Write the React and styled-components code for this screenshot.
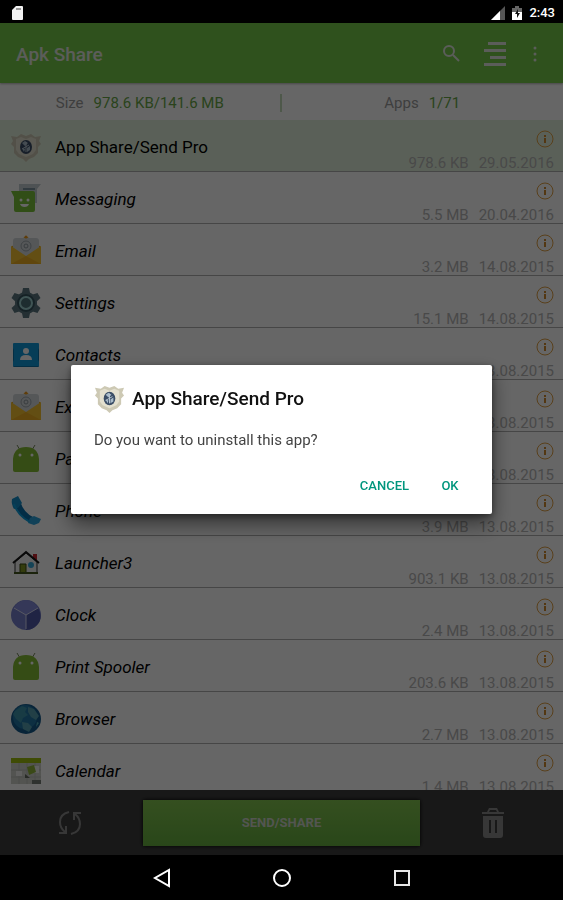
import React, { useState } from "react";
import styled, { createGlobalStyle } from "styled-components";

const GlobalStyle = createGlobalStyle`
  * {
    box-sizing: border-box;
  }
  body {
    margin: 0;
    background: #000;
    font-family: Roboto, "Liberation Sans", sans-serif;
  }
  h1, h2, p, ul {
    margin: 0;
    padding: 0;
    font-weight: 400;
  }
  button {
    border: 0;
    padding: 0;
    background: none;
    font-family: inherit;
    color: inherit;
    cursor: pointer;
  }
  svg {
    display: block;
  }
`;

const Screen = styled.div`
  display: flex;
  flex-direction: column;
  height: 100vh;
`;

const StatusBar = styled.div`
  display: flex;
  align-items: center;
  gap: 7px;
  height: 23px;
  padding: 2px 8px 0 11px;
  background: #000;
  color: #fff;
  font-size: 13px;
  font-weight: 500;
`;

const Spacer = styled.span`
  flex: 1;
`;

const AppWindow = styled.div`
  position: relative;
  display: flex;
  flex-direction: column;
  flex: 1;
  min-height: 0;
  background: #fff;
`;

const Toolbar = styled.header`
  display: flex;
  align-items: center;
  gap: 22px;
  height: 60px;
  padding: 2px 22px 0 16px;
  background: #76cb49;
  color: #e4e8e0;
  box-shadow: 0 1px 2px rgba(0, 0, 0, 0.3);
`;

const ToolbarTitle = styled.h1`
  flex: 1;
  font-size: 19px;
  font-weight: 500;
`;

const Summary = styled.div`
  display: grid;
  grid-template-columns: 1fr 1fr;
  align-items: center;
  height: 37px;
  padding-top: 2px;
  font-size: 15px;
`;

const SummaryCell = styled.p`
  display: flex;
  justify-content: center;
  gap: 10px;
  color: #9c9c9c;
  border-right: ${(props) => (props.$divided ? "2px solid #c4dcb8" : "0")};
`;

const SummaryValue = styled.span`
  color: #69a848;
`;

const List = styled.ul`
  flex: 1;
  min-height: 0;
  overflow-y: auto;
  scrollbar-width: none;
  list-style: none;
`;

const Row = styled.li`
  display: flex;
  align-items: center;
  gap: 13px;
  height: 52px;
  padding: 2px 9px 0 10px;
  border-bottom: 1px solid #b0b0b0;
  background: ${(props) => (props.$selected ? "#e2f1db" : "#fff")};
`;

const RowTitle = styled.span`
  flex: 1;
  padding-top: 1px;
  color: #000;
  font-size: 17px;
  font-style: ${(props) => (props.$system ? "italic" : "normal")};
`;

const RowSide = styled.div`
  display: flex;
  flex-direction: column;
  align-items: flex-end;
  justify-content: space-between;
  height: 100%;
  padding-top: 8px;
`;

const RowMeta = styled.p`
  display: flex;
  gap: 10px;
  color: #b6b6b6;
  font-size: 15px;
  line-height: 15px;
`;

const Actions = styled.footer`
  display: grid;
  grid-template-columns: 1fr 2fr 1fr;
  align-items: center;
  justify-items: center;
  height: 65px;
  background: #3e3e3e;
  color: #8a8a8a;
`;

const SendButton = styled.button`
  width: calc(100% - 4px);
  height: 46px;
  background: linear-gradient(#84c650, #67b040);
  box-shadow: 0 0 4px #000;
  color: #cfd4ca;
  font-size: 13px;
  font-weight: 700;
`;

const Scrim = styled.div`
  position: absolute;
  inset: 0;
  display: flex;
  align-items: center;
  padding: 0 71px;
  background: rgba(0, 0, 0, 0.6);
`;

const Dialog = styled.section`
  flex: 1;
  padding: 18px 19px 10px 23px;
  border-radius: 2px;
  background: #fff;
  box-shadow: 0 10px 20px rgba(0, 0, 0, 0.5), 0 2px 6px rgba(0, 0, 0, 0.4);
`;

const DialogHeader = styled.div`
  display: flex;
  align-items: center;
  gap: 7px;
`;

const DialogTitle = styled.h2`
  color: #111;
  font-size: 19px;
  font-weight: 500;
`;

const DialogText = styled.p`
  padding-top: 16px;
  color: #444;
  font-size: 15px;
  line-height: 20px;
`;

const DialogButtons = styled.div`
  display: flex;
  justify-content: flex-end;
  gap: 18px;
  padding-top: 18px;
`;

const DialogButton = styled.button`
  min-width: 46px;
  height: 36px;
  color: #00967d;
  font-size: 13px;
  font-weight: 500;
`;

const NavBar = styled.nav`
  display: flex;
  align-items: center;
  justify-content: center;
  gap: 96px;
  height: 45px;
  background: #000;
`;

const Icon = ({ size = 32, children, box = 32 }) => (
  <svg width={size} height={size} viewBox={`0 0 ${box} ${box}`} aria-hidden="true">
    {children}
  </svg>
);

const ShieldIcon = ({ size }) => (
  <Icon size={size}>
    <path d="M1 5l6 1 4-3 5 2 5-2 4 3 6-1-2 5 2 3-3 3v6l-4 4-5 2-3 3-3-3-5-2-4-4v-6l-3-3 2-3z" fill="#cdc9b4" />
    <path d="M6 8l5-2 5 2 5-2 5 2v11l-3 4-7 3-7-3-3-4z" fill="#e3e0cf" />
    <ellipse cx="16" cy="16" rx="6" ry="7" fill="#3a4d66" />
    <path d="M12 12l3-2 3 2-3 3zM17 17l3-2v4l-3 2zM12 17l3 1-1 3z" fill="#a9bccb" />
    <path d="M16 11v10M12 18l7-4" stroke="#b9c6d2" />
  </Icon>
);

const MessagingIcon = () => (
  <Icon>
    <path d="M9 1h22l-4 5v14H9z" fill="#c3ced3" />
    <path d="M13 5h12v2H13z" fill="#7b929d" />
    <path d="M1 8h22q2 0 2 2v17q0 2-2 2H6q-2 0-2-2V14z" fill="#7cc43a" />
    <circle cx="11" cy="17" r="1.500" fill="#fff" />
    <circle cx="18" cy="17" r="1.500" fill="#fff" />
    <path d="M10 21h9q-1 3-4.500 3T10 21z" fill="#fff" />
  </Icon>
);

const EmailIcon = () => (
  <Icon>
    <path d="M1 12L16 1l15 11v5H1z" fill="#e5a51f" />
    <path d="M3 6q0-3 3-3h20q3 0 3 3v9l-13 8L3 15z" fill="#d5dadd" />
    <circle cx="16" cy="11" r="5" fill="none" stroke="#9da6ab" />
    <circle cx="16" cy="11" r="2" fill="none" stroke="#8e989d" />
    <path d="M1 11l15 10 15-10v18H1z" fill="#f8c330" />
    <path d="M1 29l15-8 15 8z" fill="#efb022" />
    <circle cx="16" cy="2" r="1.500" fill="#ee9a1c" />
  </Icon>
);

const SettingsIcon = () => (
  <Icon>
    <g fill="#5b7781">
      <circle cx="16" cy="16" r="11" />
      {[0, 60, 120].map((angle) => (
        <path key={angle} d="M12 6l1-5h6l1 5v20l-1 5h-6l-1-5z" transform={`rotate(${angle} 16 16)`} />
      ))}
    </g>
    <circle cx="16" cy="16" r="9" fill="#35535e" />
    <circle cx="16" cy="16" r="6" fill="#4d7178" stroke="#9fd2d2" strokeWidth="2" />
  </Icon>
);

const ContactsIcon = () => (
  <Icon>
    <path d="M3 8h26v19q0 1-1 1H4q-1 0-1-1z" fill="#0874aa" />
    <path d="M4 4h24q1 0 1 1v4l-1 2v10l1 2v4H3v-4l1-2V11L3 9V5q0-1 1-1z" fill="#119ada" />
    <circle cx="16" cy="12" r="3" fill="#fff" />
    <path d="M10 21q0-5 6-5t6 5z" fill="#fff" />
  </Icon>
);

const AndroidIcon = () => (
  <Icon>
    <path d="M7 2l3 5M25 2l-3 5" stroke="#77875c" strokeWidth="1" />
    <path d="M3 16Q4 4 16 4t13 12v11q0 2-2 2H5q-2 0-2-2z" fill="#86bd35" />
    <circle cx="10" cy="12" r="1.500" fill="#fff" />
    <circle cx="22" cy="12" r="1.500" fill="#fff" />
  </Icon>
);

const PhoneIcon = () => (
  <Icon>
    <path d="M8 9q3 10 14 16" fill="none" stroke="#0870ad" strokeWidth="6" />
    <path d="M2 4l6-3 4 7-4 5-4 1Q1 9 2 4z" fill="#158fca" />
    <path d="M20 23l4-2 7 3-2 4-5 2-6-2z" fill="#2ba3dc" />
    <path d="M4 9q4 12 16 18" fill="none" stroke="#0da0de" strokeWidth="2" />
  </Icon>
);

const HouseIcon = () => (
  <Icon>
    <path d="M23 7h4v7l-4-3z" fill="#c82730" />
    <path d="M5 15L16 6l11 9v11H5z" fill="#f2f2f2" stroke="#333" strokeWidth="1" />
    <path d="M3 16L16 5l13 11" fill="none" stroke="#181818" strokeWidth="2" />
    <path d="M10 17h6v9h-6z" fill="#829722" stroke="#3b4610" />
    <circle cx="21" cy="18" r="3" fill="#35a7d8" />
    <path d="M4 26h24" stroke="#44581e" strokeWidth="2" />
  </Icon>
);

const ClockIcon = () => (
  <Icon>
    <circle cx="16" cy="16" r="15" fill="#7780cc" />
    <path d="M16 16L4 9q5-8 12-8t12 8z" fill="#858ddb" />
    <path d="M16 16l12-7q6 11-2 18-4 4-10 4z" fill="#515aaa" />
    <path d="M4 9l12 7 12-7M16 16v14" fill="none" stroke="#d7daf5" strokeWidth="1" />
  </Icon>
);

const GlobeIcon = () => (
  <Icon>
    <circle cx="16" cy="16" r="15" fill="#145b8d" />
    <circle cx="15" cy="14" r="12" fill="#2177a6" />
    <path d="M5 8l7-5 5 2-2 4 3 3-5 3-2 5-5-4-3-5z" fill="#3d93ab" />
    <path d="M18 4l6 2 5 7-3 4-5-3-3-5zM12 19l6 1 4 4-3 5-6-3z" fill="#559fae" />
    <path d="M27 19l2 1-3 4z" fill="#52aebb" />
  </Icon>
);

const CalendarIcon = () => (
  <Icon>
    <path d="M1 3h30v26H1z" fill="#cfd1cb" />
    <path d="M1 3h30v5H1z" fill="#9dbd0d" />
    <path d="M1 15h30M1 22h30M9 8v21M17 8v21M25 8v21" stroke="#bbbdb8" />
    <path d="M6 16h6v5H6zM24 11h5v7h-5z" fill="#f1f1ed" />
    <path d="M17 12l7-2 2 7-7 3z" fill="#91b63a" />
    <path d="M15 19l5 4h-5z" fill="#656b60" />
    <path d="M22 25h9v4h-9z" fill="#777d77" />
  </Icon>
);

const InfoIcon = () => (
  <Icon size={18} box={18}>
    <circle cx="9" cy="9" r="8" fill="none" stroke="#dfa044" strokeWidth="1" />
    <path d="M8 8h2v5H8zM8 5h2v2H8z" fill="#cf8b2e" />
  </Icon>
);

const apps = [
  { name: "App Share/Send Pro", size: "978.6 KB", date: "29.05.2016", icon: ShieldIcon, user: true },
  { name: "Messaging", size: "5.5 MB", date: "20.04.2016", icon: MessagingIcon },
  { name: "Email", size: "3.2 MB", date: "14.08.2015", icon: EmailIcon },
  { name: "Settings", size: "15.1 MB", date: "14.08.2015", icon: SettingsIcon },
  { name: "Contacts", size: "4.8 MB", date: "13.08.2015", icon: ContactsIcon },
  { name: "Exchange", size: "1.9 MB", date: "13.08.2015", icon: EmailIcon },
  { name: "Package", size: "1.2 MB", date: "13.08.2015", icon: AndroidIcon },
  { name: "Phone", size: "3.9 MB", date: "13.08.2015", icon: PhoneIcon },
  { name: "Launcher3", size: "903.1 KB", date: "13.08.2015", icon: HouseIcon },
  { name: "Clock", size: "2.4 MB", date: "13.08.2015", icon: ClockIcon },
  { name: "Print Spooler", size: "203.6 KB", date: "13.08.2015", icon: AndroidIcon },
  { name: "Browser", size: "2.7 MB", date: "13.08.2015", icon: GlobeIcon },
  { name: "Calendar", size: "1.4 MB", date: "13.08.2015", icon: CalendarIcon },
];

const AppRow = ({ app }) => {
  const AppIcon = app.icon;
  return (
    <Row $selected={app.user}>
      <AppIcon />
      <RowTitle $system={!app.user}>{app.name}</RowTitle>
      <RowSide>
        <button aria-label={`About ${app.name}`}>
          <InfoIcon />
        </button>
        <RowMeta>
          <span>{app.size}</span>
          <span>{app.date}</span>
        </RowMeta>
      </RowSide>
    </Row>
  );
};

const UninstallDialog = ({ onClose }) => (
  <Scrim>
    <Dialog role="dialog" aria-modal="true" aria-labelledby="dialog-title">
      <DialogHeader>
        <ShieldIcon size={31} />
        <DialogTitle id="dialog-title">App Share/Send Pro</DialogTitle>
      </DialogHeader>
      <DialogText>Do you want to uninstall this app?</DialogText>
      <DialogButtons>
        <DialogButton onClick={onClose}>CANCEL</DialogButton>
        <DialogButton onClick={onClose}>OK</DialogButton>
      </DialogButtons>
    </Dialog>
  </Scrim>
);

const App = () => {
  const [isOpen, setIsOpen] = useState(true);
  return (
    <Screen>
      <GlobalStyle />
      <StatusBar>
        <svg width="13" height="16" viewBox="0 0 13 16" aria-hidden="true">
          <path d="M5 1h6q1 0 1 1v12q0 1-1 1H2q-1 0-1-1V5z" fill="#f2f2f2" />
          <path d="M5 3h5v2H5z" fill="#999" />
        </svg>
        <Spacer />
        <svg width="14" height="14" viewBox="0 0 14 14" aria-hidden="true">
          <path d="M0 14L14 0v14z" fill="#555" />
          <path d="M0 14l9-9v9z" fill="#fff" />
        </svg>
        <svg width="10" height="14" viewBox="0 0 10 14" aria-hidden="true">
          <path d="M3 0h4v2h3v4H0V2h3z" fill="#666" />
          <path d="M0 6h10v8H0z" fill="#fff" />
          <path d="M6 3L3 8h2v4l3-5H6z" fill="#111" />
        </svg>
        <span>2:43</span>
      </StatusBar>

      <AppWindow>
        <Toolbar>
          <ToolbarTitle>Apk Share</ToolbarTitle>
          <button aria-label="Search">
            <svg width="20" height="20" viewBox="0 0 20 20" fill="none" stroke="currentColor" strokeWidth="2" aria-hidden="true">
              <circle cx="8" cy="7" r="5" />
              <path d="M12 11l6 6" />
            </svg>
          </button>
          <button aria-label="Sort">
            <svg width="24" height="24" viewBox="0 0 24 24" fill="currentColor" aria-hidden="true">
              <path d="M5 0h18v3H5zM1 7h22v3H1zM7 14h16v3H7zM1 21h22v3H1z" />
            </svg>
          </button>
          <button aria-label="More options">
            <svg width="12" height="18" viewBox="0 0 12 18" fill="currentColor" aria-hidden="true">
              <circle cx="6" cy="3" r="1.500" />
              <circle cx="6" cy="9" r="1.500" />
              <circle cx="6" cy="15" r="1.500" />
            </svg>
          </button>
        </Toolbar>

        <Summary>
          <SummaryCell $divided>
            Size <SummaryValue>978.6 KB/141.6 MB</SummaryValue>
          </SummaryCell>
          <SummaryCell>
            Apps <SummaryValue>1/71</SummaryValue>
          </SummaryCell>
        </Summary>

        <List>
          {apps.map((app) => (
            <AppRow key={app.name} app={app} />
          ))}
        </List>

        <Actions>
          <button aria-label="Refresh">
            <svg width="24" height="24" viewBox="0 0 24 24" fill="none" stroke="currentColor" strokeWidth="2" aria-hidden="true">
              <path d="M11 1Q2 3 2 11q0 6 5 10M1 22h7v-7M13 23q9-2 9-10 0-6-5-10M23 2h-7v7" />
            </svg>
          </button>
          <SendButton>SEND/SHARE</SendButton>
          <button aria-label="Uninstall">
            <svg width="24" height="32" viewBox="0 0 24 32" fill="currentColor" aria-hidden="true">
              <path d="M1 5h5l2-4h8l2 4h5v2H1zM8 5h8l-1-2H9z" fillRule="evenodd" />
              <path d="M2 9h20v19q0 3-3 3H5q-3 0-3-3zM8 13v13h2V13zM14 13v13h2V13z" fillRule="evenodd" />
            </svg>
          </button>
        </Actions>

        {isOpen && <UninstallDialog onClose={() => setIsOpen(false)} />}
      </AppWindow>

      <NavBar>
        <button aria-label="Back">
          <svg width="24" height="24" viewBox="0 0 24 24" fill="none" stroke="#fff" strokeWidth="2" aria-hidden="true">
            <path d="M19 4v16L5 12z" />
          </svg>
        </button>
        <button aria-label="Home">
          <svg width="24" height="24" viewBox="0 0 24 24" fill="none" stroke="#fff" strokeWidth="2" aria-hidden="true">
            <circle cx="12" cy="12" r="8" />
          </svg>
        </button>
        <button aria-label="Recent apps">
          <svg width="24" height="24" viewBox="0 0 24 24" fill="none" stroke="#e6e6e6" strokeWidth="2" aria-hidden="true">
            <path d="M5 5h14v14H5z" />
          </svg>
        </button>
      </NavBar>
    </Screen>
  );
};

export default App;
